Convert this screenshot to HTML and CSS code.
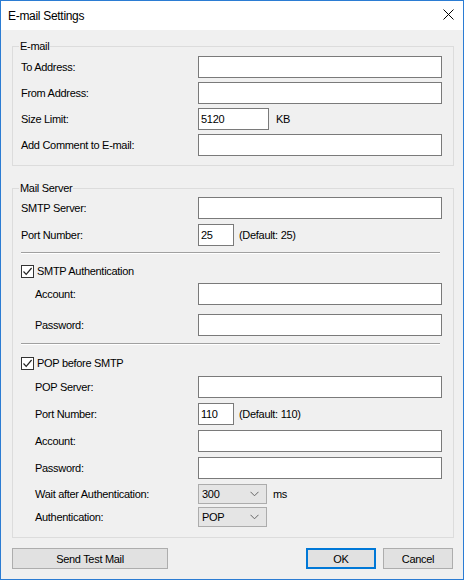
FILE: index.html
```html
<!DOCTYPE html>
<html>
<head>
<meta charset="utf-8">
<title>E-mail Settings</title>
<link rel="stylesheet" href="styles.css">
</head>
<body>
<div class="window">
  <div class="titlebar">
    <span class="title">E-mail Settings</span>
    <svg class="close" width="11" height="11" viewBox="0 0 11 11"><path d="M0.5 0.5 L10.5 10.5 M10.5 0.5 L0.5 10.5" stroke="#000" stroke-width="1" fill="none"/></svg>
  </div>
  <div class="content">
    <fieldset class="group group-email">
      <legend>E-mail</legend>
      <div class="rows">
        <div class="row"><label>To Address:</label><input class="field" type="text"></div>
        <div class="row"><label>From Address:</label><input class="field" type="text"></div>
        <div class="row"><label>Size Limit:</label><div class="inline"><input class="field small" type="text" value="5120"><span class="unit kb">KB</span></div></div>
        <div class="row"><label>Add Comment to E-mail:</label><input class="field" type="text"></div>
      </div>
    </fieldset>

    <fieldset class="group group-server">
      <legend>Mail Server</legend>
      <div class="row"><label>SMTP Server:</label><input class="field" type="text"></div>
      <div class="row r-port"><label>Port Number:</label><div class="inline"><input class="field tiny" type="text" value="25"><span class="unit">(Default: 25)</span></div></div>
      <div class="sep sep1"></div>
      <div class="check check1"><span class="box"><svg width="11" height="11" viewBox="0 0 11 11"><path d="M1.5 5.5 L4.2 8.3 L9.6 2" stroke="#222" stroke-width="1.2" fill="none"/></svg></span><span>SMTP Authentication</span></div>
      <div class="row sub r-acc1"><label>Account:</label><input class="field" type="text"></div>
      <div class="row sub r-pw1"><label>Password:</label><input class="field" type="text"></div>
      <div class="sep sep2"></div>
      <div class="check check2"><span class="box"><svg width="11" height="11" viewBox="0 0 11 11"><path d="M1.5 5.5 L4.2 8.3 L9.6 2" stroke="#222" stroke-width="1.2" fill="none"/></svg></span><span>POP before SMTP</span></div>
      <div class="rows pop">
        <div class="row sub"><label>POP Server:</label><input class="field" type="text"></div>
        <div class="row sub"><label>Port Number:</label><div class="inline"><input class="field tiny" type="text" value="110"><span class="unit">(Default: 110)</span></div></div>
        <div class="row sub"><label>Account:</label><input class="field" type="text"></div>
        <div class="row sub"><label>Password:</label><input class="field" type="text"></div>
        <div class="row sub r-sel"><label>Wait after Authentication:</label><div class="inline"><div class="combo"><span>300</span><svg width="9" height="6" viewBox="0 0 9 6"><path d="M0.5 0.8 L4.5 4.8 L8.5 0.8" stroke="#666" stroke-width="1" fill="none"/></svg></div><span class="unit ms">ms</span></div></div>
        <div class="row sub r-sel r-sel2"><label>Authentication:</label><div class="inline"><div class="combo"><span>POP</span><svg width="9" height="6" viewBox="0 0 9 6"><path d="M0.5 0.8 L4.5 4.8 L8.5 0.8" stroke="#666" stroke-width="1" fill="none"/></svg></div></div></div>
      </div>
    </fieldset>

    <div class="buttons">
      <button class="btn btn-test">Send Test Mail</button>
      <div class="right">
        <button class="btn btn-ok">OK</button>
        <button class="btn btn-cancel">Cancel</button>
      </div>
    </div>
  </div>
</div>
</body>
</html>
```

FILE: styles.css
```css
html, body {
  margin: 0;
  padding: 0;
  background: #f0f0f0;
}

.window {
  width: 464px;
  height: 580px;
  box-sizing: border-box;
  border: 1px solid #2b7cd3;
  background: #f0f0f0;
  font-family: "Liberation Sans", Arial, sans-serif;
  font-size: 11px;
  letter-spacing: -0.3px;
  color: #000;
  display: flex;
  flex-direction: column;
}

.titlebar {
  height: 29px;
  background: #fff;
  display: flex;
  align-items: center;
  justify-content: space-between;
  padding: 0 9px 0 7px;
  flex: none;
}

.title {
  font-size: 12px;
  letter-spacing: -0.3px;
}

.close {
  margin-top: -3px;
}

.content {
  padding: 0 9px 0 11px;
  display: flex;
  flex-direction: column;
}

.group {
  margin: 0;
  border: 1px solid #dcdcdc;
  padding: 0 10px 0 8px;
  min-inline-size: 0;
}

.group legend {
  padding: 0 1px;
  margin-left: -2px;
  line-height: 14px;
  height: 14px;
}

.group-email {
  margin-top: 9px;
  padding-top: 3px;
  padding-bottom: 9px;
}

.group-server {
  margin-top: 15px;
  padding-top: 2px;
  padding-bottom: 10px;
}

.rows {
  display: flex;
  flex-direction: column;
  gap: 4px;
}

.row {
  display: grid;
  grid-template-columns: 177px 1fr;
  align-items: center;
  height: 22px;
}

.row.sub label {
  padding-left: 14px;
}

.field {
  box-sizing: border-box;
  height: 22px;
  width: 244px;
  margin: 0;
  border: 1px solid #7a7a7a;
  background: #fff;
  font-family: "Liberation Sans", Arial, sans-serif;
  font-size: 11px;
  letter-spacing: -0.3px;
  padding: 0 2px;
  outline: none;
  color: #000;
}

.field.small {
  width: 71px;
}

.field.tiny {
  width: 36px;
}

.inline {
  display: flex;
  align-items: center;
}

.unit {
  margin-left: 5px;
}

.unit.kb {
  margin-left: 7px;
}

.unit.ms {
  margin-left: 6px;
}

.r-port {
  margin-top: 5px;
}

.sep {
  height: 0;
  border-top: 1px solid #a0a0a0;
  border-bottom: 1px solid #fff;
  margin-right: 3px;
}

.sep1 {
  margin-top: 6px;
}

.sep2 {
  margin-top: 7px;
}

.check {
  display: flex;
  align-items: center;
  height: 14px;
  gap: 3px;
}

.check1 {
  margin-top: 10px;
}

.check2 {
  margin-top: 11px;
}

.box {
  box-sizing: border-box;
  width: 13px;
  height: 13px;
  border: 1px solid #333;
  background: #fff;
  display: flex;
  align-items: center;
  justify-content: center;
}

.box svg {
  display: block;
}

.r-acc1 {
  margin-top: 5px;
}

.r-pw1 {
  margin-top: 9px;
}

.pop {
  margin-top: 6px;
  gap: 5px;
}

.r-sel {
  height: 20px;
}

.r-sel2 {
  margin-top: -2px;
}

.combo {
  box-sizing: border-box;
  width: 69px;
  height: 20px;
  border: 1px solid #acacac;
  background: #e5e5e5;
  display: flex;
  align-items: center;
  justify-content: space-between;
  padding: 0 7px 0 3px;
}

.combo svg {
  display: block;
}

.buttons {
  margin-top: 10px;
  display: flex;
  justify-content: space-between;
  align-items: center;
  padding-right: 1px;
}

.right {
  display: flex;
  gap: 7px;
}

.btn {
  box-sizing: border-box;
  height: 21px;
  margin: 0;
  border: 1px solid #adadad;
  background: #e1e1e1;
  font-family: "Liberation Sans", Arial, sans-serif;
  font-size: 11px;
  letter-spacing: -0.3px;
  color: #000;
  padding: 0;
}

.btn-test {
  width: 156px;
}

.btn-ok {
  width: 70px;
  border: 1px solid #0078d7;
  box-shadow: inset 0 0 0 1px #0078d7;
}

.btn-cancel {
  width: 70px;
}
```
